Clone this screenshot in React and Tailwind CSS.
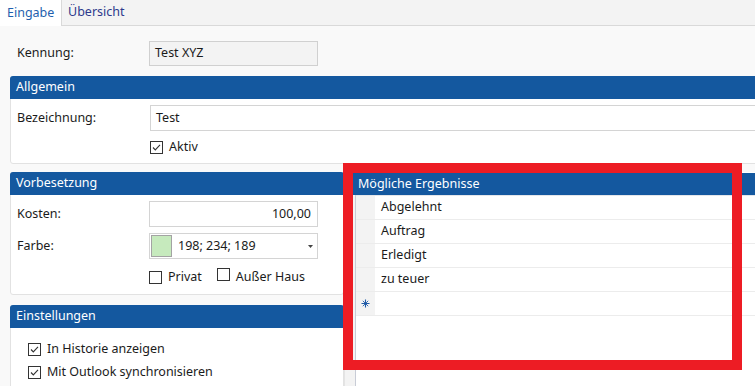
import React from 'react';

const font = { fontFamily: '"Noto Sans", "Open Sans", Arial, sans-serif' };

function Check({ checked }) {
  return (
    <span className="relative inline-flex h-[13px] w-[13px] shrink-0 items-center justify-center border border-[#333] bg-white">
      {checked && (
        <svg viewBox="0 0 11 11" className="h-[11px] w-[11px]" aria-hidden="true">
          <path d="M2 5.5l2.3 2.4L9 2.8" fill="none" stroke="#333" strokeWidth="1.1" />
        </svg>
      )}
    </span>
  );
}

function Section({ title, children, className = '' }) {
  return (
    <section className={`rounded-[3px] border border-[#e2e2e2] bg-white ${className}`}>
      <div className="-mx-px -mt-px flex h-[23px] items-center rounded-t-[3px] bg-[#14589f] pl-[6px] text-white">
        {title}
      </div>
      {children}
    </section>
  );
}

function Star() {
  return (
    <svg viewBox="0 0 9 9" className="h-[9px] w-[9px]" aria-hidden="true">
      <g stroke="#1f5aa6" strokeWidth="1.1">
        <path d="M4.5 0.5v8M0.5 4.5h8" />
        <path d="M1.8 1.8l5.4 5.4M7.2 1.8l-5.4 5.4" strokeWidth="0.9" />
      </g>
    </svg>
  );
}

const results = ['Abgelehnt', 'Auftrag', 'Erledigt', 'zu teuer'];

export default function App() {
  return (
    <div className="relative h-[386px] w-[755px] overflow-hidden bg-[#f9f9f9] text-[12.5px] text-[#1b1b1b]" style={font}>
      {/* tabs */}
      <div className="flex h-[26px] border-b border-[#d9d9d9] bg-[#f3f3f3]">
        <div className="flex h-[26px] w-[62px] items-center self-start border-r border-[#d9d9d9] bg-white pl-[7px] text-[#1f5fae]">
          Eingabe
        </div>
        <div className="flex items-center pl-[6px] text-[#2d3a8c]">Übersicht</div>
      </div>

      {/* Kennung */}
      <div className="mt-[15px] flex h-[25px] items-center">
        <span className="w-[149px] pl-[17px]">Kennung:</span>
        <div className="flex h-[25px] w-[169px] items-center border border-[#d0d0d0] bg-[#f3f3f3] pl-[5px]">Test XYZ</div>
      </div>

      {/* Allgemein */}
      <Section title="Allgemein" className="ml-[10px] mt-[10px] w-[800px] pb-[7px]">
        <div className="flex items-center pt-[6px]">
          <span className="w-[139px] pl-[6px]">Bezeichnung:</span>
          <div className="flex h-[26px] flex-1 items-center border border-[#d4d4d4] bg-white pl-[5px]">Test</div>
        </div>
        <div className="mt-[7px] flex h-[18px] items-center gap-[6px] pl-[139px]">
          <Check checked />
          <span>Aktiv</span>
        </div>
      </Section>

      <div className="mt-[8px] flex h-[260px]">
        {/* left column */}
        <div className="ml-[10px] w-[334px] shrink-0">
          <Section title="Vorbesetzung" className="pb-[9px]">
            <div className="flex items-center pt-[6px]">
              <span className="w-[138px] pl-[6px]">Kosten:</span>
              <div className="flex h-[26px] w-[169px] items-center justify-end border border-[#d4d4d4] bg-white pr-[6px]">100,00</div>
            </div>
            <div className="mt-[6px] flex items-center">
              <span className="w-[138px] pl-[6px]">Farbe:</span>
              <div className="flex h-[26px] w-[169px] items-center border border-[#d4d4d4] bg-white pl-[1px]">
                <span className="h-[22px] w-[21px] border border-[#a3a3a3] bg-[#c6eabd]" />
                <span className="ml-[6px]">198; 234; 189</span>
                <svg viewBox="0 0 5 3" className="ml-auto mr-[4px] h-[3px] w-[5px]" aria-hidden="true">
                  <path d="M0 0h5L2.5 3z" fill="#444" />
                </svg>
              </div>
            </div>
            <div className="mt-[10px] flex h-[16px] items-center pl-[138px]">
              <Check />
              <span className="ml-[6px]">Privat</span>
              <span className="ml-[15px]"><Check /></span>
              <span className="ml-[6px]">Außer Haus</span>
            </div>
          </Section>

          <Section title="Einstellungen" className="mt-[10px] h-[120px]">
            <div className="mt-[12px] flex h-[18px] items-center gap-[6px] pl-[17px]">
              <Check checked />
              <span>In Historie anzeigen</span>
            </div>
            <div className="mt-[5px] flex h-[18px] items-center gap-[6px] pl-[17px]">
              <Check checked />
              <span>Mit Outlook synchronisieren</span>
            </div>
          </Section>
        </div>

        {/* splitter */}
        <div className="w-[11px] shrink-0 border-l border-[#e4e4e4] bg-[#f3f3f3]" />

        {/* Mögliche Ergebnisse */}
        <div className="flex-1 border-l border-[#c8ccd6] bg-white">
          <div className="-ml-[3px] mt-[1px] flex h-[22px] items-center bg-[#14589f] pl-[5px] text-white">
            Mögliche Ergebnisse
          </div>
          <div className="border-t border-[#e4e6ea]">
            {results.map((r) => (
              <div key={r} className="flex h-[24px] border-b border-[#ececec]">
                <span className="w-[19px] bg-[#f3f3f3]" />
                <span className="flex items-center pl-[6px]">{r}</span>
              </div>
            ))}
            <div className="flex h-[24px] border-b border-[#ececec]">
              <span className="flex w-[19px] items-center justify-center bg-[#f3f3f3]">
                <Star />
              </span>
            </div>
          </div>
        </div>
      </div>

      {/* annotation */}
      <div className="pointer-events-none absolute left-[343px] top-[163px] h-[207px] w-[399px] border-[10px] border-[#ed1c24]" />
    </div>
  );
}
